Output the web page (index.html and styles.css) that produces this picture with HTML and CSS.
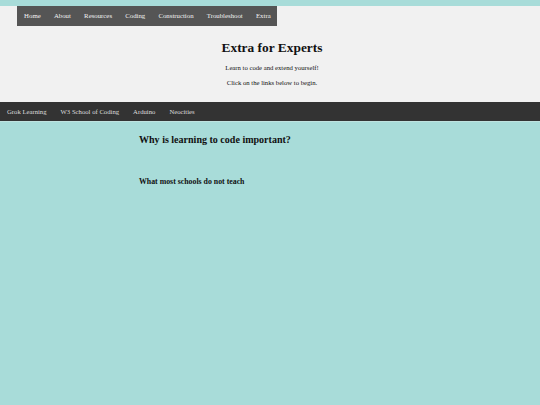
FILE: index.html
```html
<!DOCTYPE html>
<html>
<head>
<meta charset="utf-8">
<title>Extra for Experts</title>
<link rel="stylesheet" href="styles.css">
</head>
<body>
<header class="header">
  <nav class="topnav">
    <a href="#">Home</a>
    <a href="#">About</a>
    <a href="#">Resources</a>
    <a href="#">Coding</a>
    <a href="#">Construction</a>
    <a href="#">Troubleshoot</a>
    <a href="#">Extra</a>
  </nav>
  <h1 class="title">Extra for Experts</h1>
  <p class="lead">Learn to code and extend yourself!</p>
  <p class="lead">Click on the links below to begin.</p>
</header>
<nav class="linkbar">
  <a href="#">Grok Learning</a>
  <a href="#">W3 School of Coding</a>
  <a href="#">Arduino</a>
  <a href="#">Neocities</a>
</nav>
<main class="content">
  <h2 class="q">Why is learning to code important?</h2>
  <h3 class="sub">What most schools do not teach</h3>
</main>
</body>
</html>
```
FILE: styles.css
```css
html, body {
  margin: 0;
  padding: 0;
}
body {
  background: #a8dcd9;
  font-family: "Liberation Serif", "Times New Roman", serif;
  font-size: 6.7px;
  color: #111;
  padding-top: 6px;
}
.header {
  background: #f1f1f1;
  height: 96px;
  display: flex;
  flex-direction: column;
  align-items: center;
  padding-left: 4px;
  box-sizing: border-box;
}
.topnav {
  align-self: flex-start;
  margin-left: 13px;
  width: 260px;
  height: 20px;
  background: #555;
  display: flex;
  align-items: center;
  padding-left: 0.5px;
  box-sizing: border-box;
}
.topnav a {
  color: #f2f2f2;
  text-decoration: none;
  font-size: 6.8px;
  padding: 0 6.6px;
  line-height: 20px;
}
.title {
  font-size: 2em;
  font-weight: bold;
  margin: 14px 0 0;
  line-height: 16px;
}
.lead {
  margin: 7px 0 0;
  line-height: 9px;
}
.lead + .lead {
  margin-top: 6px;
}
.linkbar {
  background: #333;
  height: 19px;
  display: flex;
  align-items: center;
  border-bottom: 1px solid #bfe3e0;
}
.linkbar a {
  color: #ddd;
  text-decoration: none;
  padding: 0 7px;
  line-height: 19px;
}
.content {
  padding-left: 139px;
}
.q {
  font-size: 1.5em;
  font-weight: bold;
  margin: 12px 0 0;
  line-height: 12px;
}
.sub {
  font-size: 1.17em;
  font-weight: bold;
  margin: 31px 0 0;
  line-height: 9px;
}
```
